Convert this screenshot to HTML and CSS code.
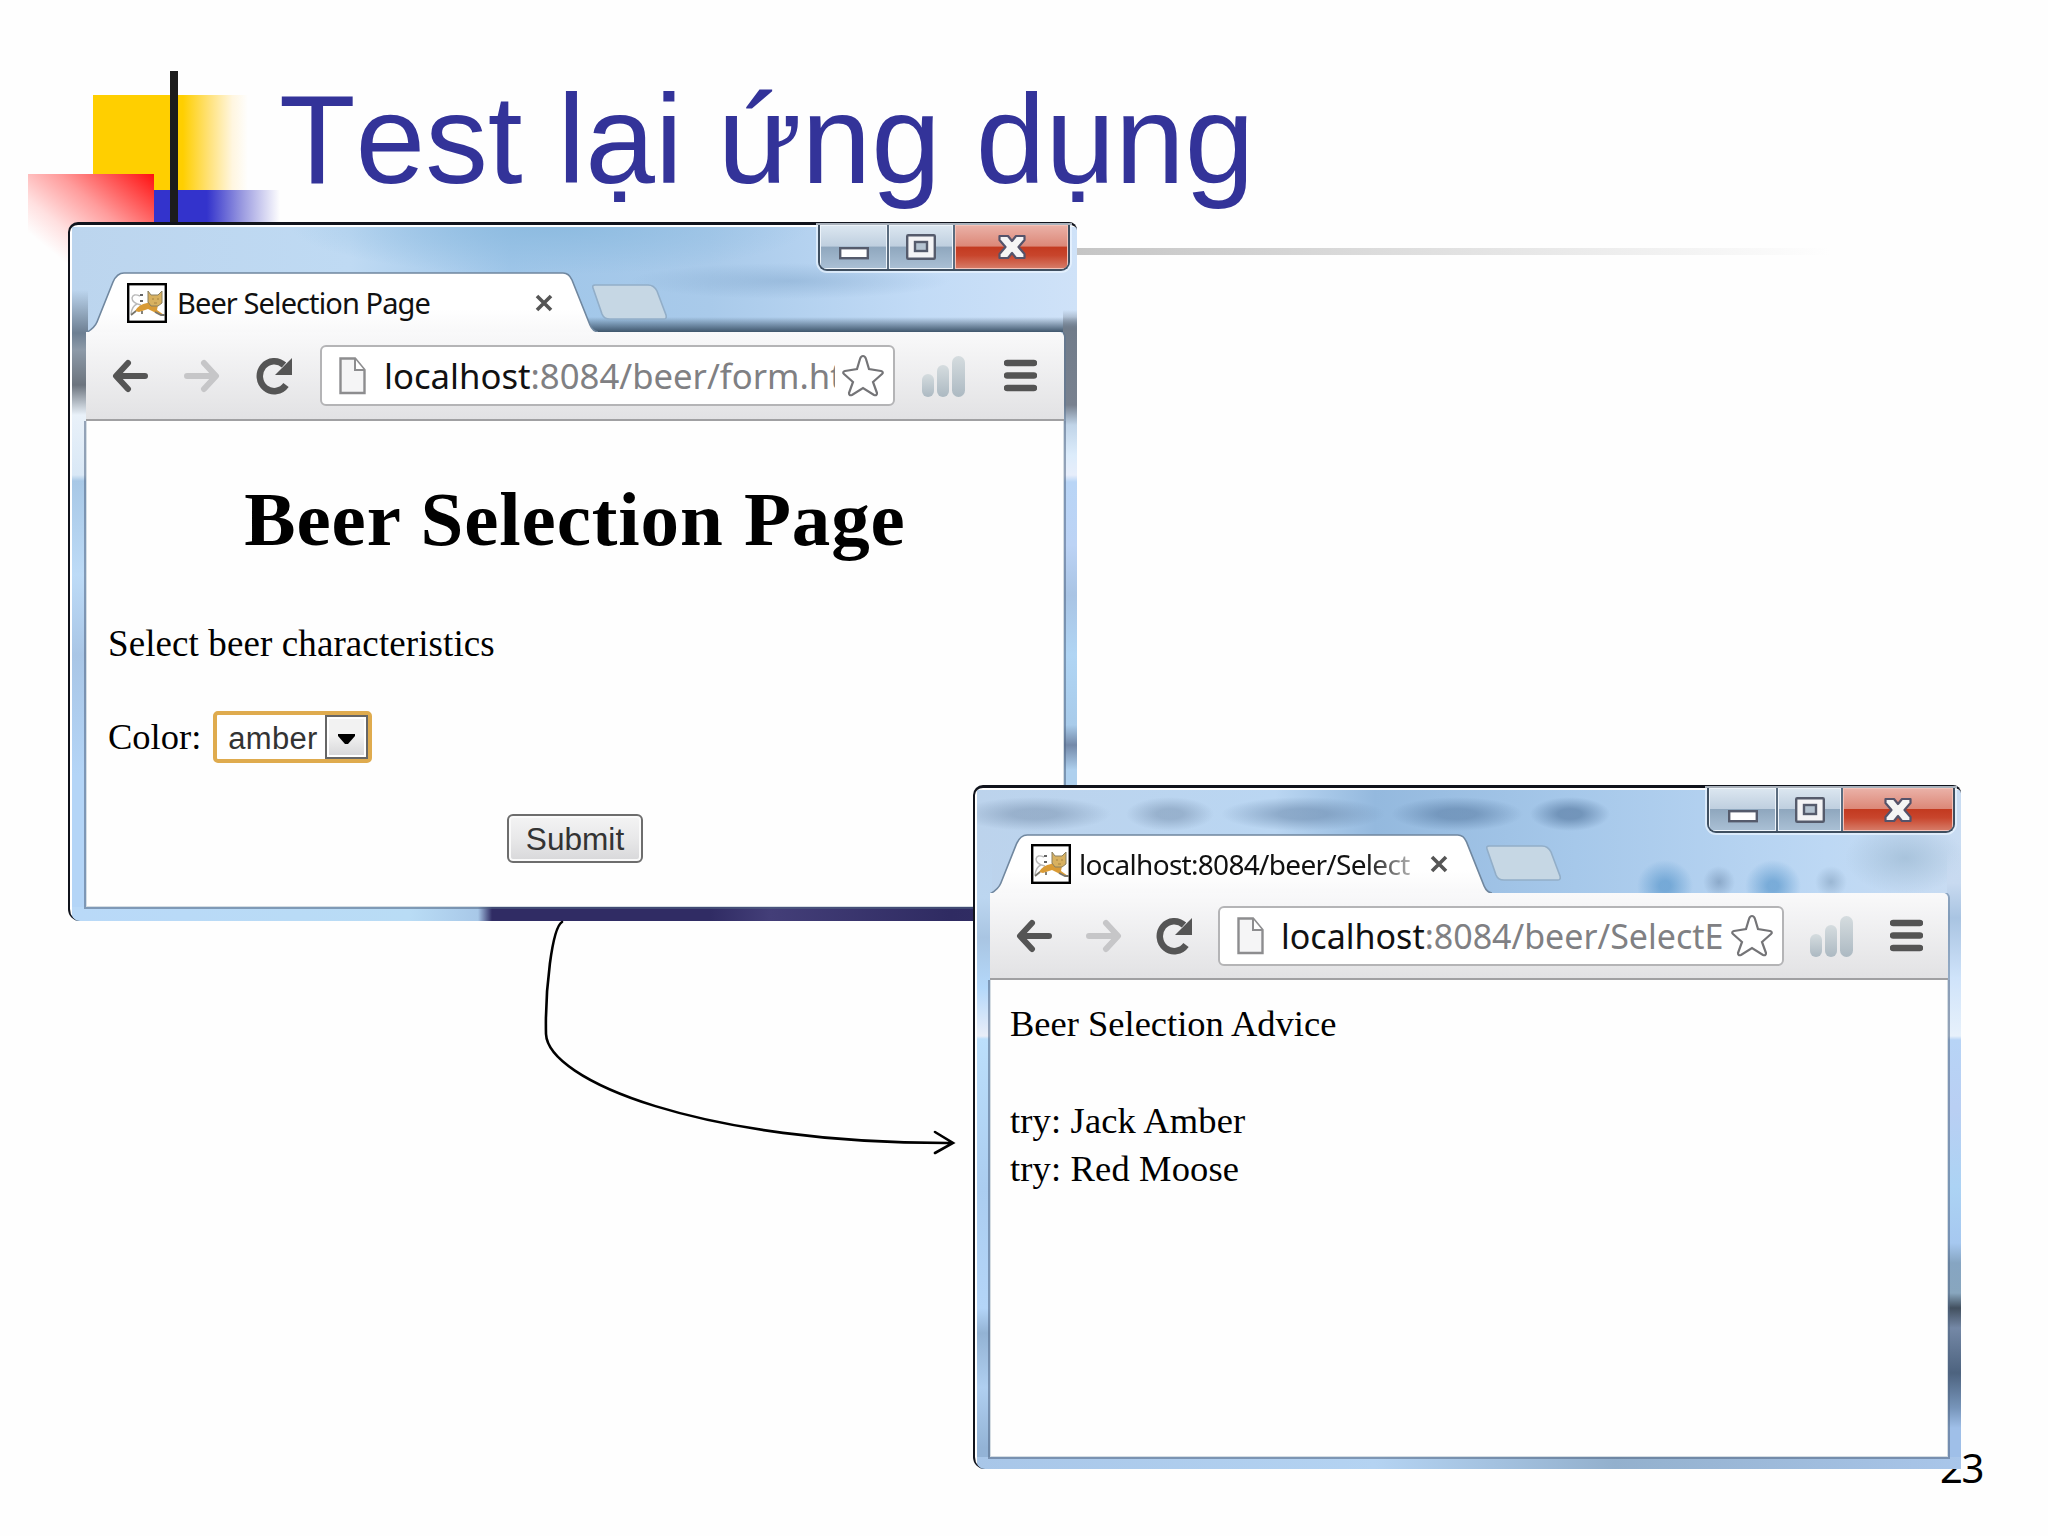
FILE: index.html
```
<!DOCTYPE html>
<html lang="vi">
<head>
    <meta charset="UTF-8">
    <title>Test lại ứng dụng</title>
    <link rel="stylesheet" href="styles.css">
</head>
<body>
    <!-- shared icons -->
    <svg class="icon-defs" width="0" height="0">
        <defs>
            <linearGradient id="tabFill" x1="0" y1="0" x2="0" y2="1">
                <stop offset="0" stop-color="#ffffff"/>
                <stop offset="0.6" stop-color="#ffffff"/>
                <stop offset="1" stop-color="#f8f8f9"/>
            </linearGradient>
            <linearGradient id="barFill" x1="0" y1="0" x2="0" y2="1">
                <stop offset="0" stop-color="#d5dcdf"/>
                <stop offset="1" stop-color="#acb9c2"/>
            </linearGradient>
        </defs>
        <symbol id="tab" viewBox="0 0 512 61" preserveAspectRatio="none">
            <path d="M0 61C5 58 9 55 11 50L27 10Q31 1 38 1H477Q483 1 486 8L504 53Q507 60 513 60V61Z" fill="url(#tabFill)"/>
            <path d="M0 61C5 58 9 55 11 50L27 10Q31 1 38 1H477Q483 1 486 8L504 53Q507 60 513 60" fill="none" stroke="#70879f" stroke-width="1.6"/>
        </symbol>
        <symbol id="newtab" viewBox="0 0 75 36" preserveAspectRatio="none">
            <path d="M3 1H56Q62 1 65 7L74 31Q75 35 72 35H18Q12 35 10 30L1 4Q0 1 3 1Z" fill="#c6d7e4" stroke="#92aec8" stroke-width="1.6"/>
        </symbol>
        <symbol id="cat" viewBox="0 0 40 40" preserveAspectRatio="none">
            <rect x="1.2" y="1.2" width="37.6" height="37.6" fill="#fff" stroke="#000" stroke-width="2.4"/>
            <path d="M14 22Q5 20 5 15Q6 10 13 13M10 21Q5 23 4 31" fill="none" stroke="#b9b9b9" stroke-width="1.4"/>
            <path d="M13 12h3M13 18h3" stroke="#333" stroke-width="1.6"/>
            <path d="M8 28Q12 21 20 20L23 18L31 22L30 27L37 32L29 30L21 26L12 29Z" fill="#d99b36"/>
            <path d="M21 8L24 12H31L35 8V20L31 23H24L21 19Z" fill="#d8b160" stroke="#8b8060" stroke-width="1"/>
            <path d="M25 16h2M30 16h2M27 20h3" stroke="#a88440" stroke-width="1.2"/>
            <path d="M9 28L4 32M15 28V31M28 29L34 32H38" fill="none" stroke="#78756c" stroke-width="1.8"/>
        </symbol>
        <symbol id="close" viewBox="0 0 18 18" preserveAspectRatio="none">
            <path d="M2 2L16 16M16 2L2 16" stroke="#555" stroke-width="3.600"/>
        </symbol>
        <symbol id="back" viewBox="0 0 36 34" preserveAspectRatio="none">
            <path d="M33 17H5M16 4L4 17L16 30" fill="none" stroke="currentColor" stroke-width="6" stroke-linecap="round" stroke-linejoin="round"/>
        </symbol>
        <symbol id="reload" viewBox="0 0 38 38" preserveAspectRatio="none">
            <path d="M31 28A14.5 15 0 1 1 29 8" fill="none" stroke="#555" stroke-width="6.5"/>
            <path d="M37 1V18H20Z" fill="#555"/>
        </symbol>
        <symbol id="page" viewBox="0 0 27 38" preserveAspectRatio="none">
            <path d="M1.5 1.5H16L25.5 13V36H1.5Z" fill="#f5f5f6" stroke="#8d8d8f" stroke-width="2.4"/>
            <path d="M16 2V13H25" fill="#fff" stroke="#8d8d8f" stroke-width="2"/>
        </symbol>
        <symbol id="star" viewBox="0 0 44 44" preserveAspectRatio="none">
            <path d="M22 2Q24 2 25 5L28 15L40 17Q43 18 41 20L32 28L36 39Q36 42 33 41L22 34L11 41Q8 42 8 39L12 28L3 20Q1 18 4 17L16 15L19 5Q20 2 22 2Z" fill="#fff" stroke="#747477" stroke-width="2.2"/>
        </symbol>
        <symbol id="bars" viewBox="0 0 43 42" preserveAspectRatio="none">
            <rect x="0" y="19" width="12" height="23" rx="6" fill="url(#barFill)"/>
            <rect x="15" y="10" width="12" height="32" rx="6" fill="url(#barFill)"/>
            <rect x="30" y="1" width="13" height="41" rx="6.500" fill="url(#barFill)"/>
        </symbol>
        <symbol id="menu" viewBox="0 0 33 33" preserveAspectRatio="none">
            <path d="M3 4H30M3 16.5H30M3 29H30" stroke="#545454" stroke-width="6.4" stroke-linecap="round"/>
        </symbol>
        <symbol id="min" viewBox="0 0 30 26" preserveAspectRatio="none">
            <rect x="1.2" y="14.2" width="27.6" height="10" fill="#fff" stroke="#555b6c" stroke-width="2.4"/>
        </symbol>
        <symbol id="max" viewBox="0 0 30 26" preserveAspectRatio="none">
            <rect x="1.2" y="1.2" width="27.6" height="23.6" rx="1" fill="#f4f4f6" stroke="#555b6c" stroke-width="2.4"/>
            <rect x="9" y="8" width="12" height="9" fill="#b4c3d1" stroke="#555b6c" stroke-width="2.4"/>
        </symbol>
        <symbol id="exit" viewBox="0 0 28 26" preserveAspectRatio="none">
            <path d="M1.500 2H10L14 7L18 2H26.500V6L20.500 13L26.500 20V24H18L14 19L10 24H1.500V20L7.500 13L1.500 6Z" fill="#f5f5f5" stroke="#55536a" stroke-width="2.2" stroke-linejoin="round"/>
        </symbol>
    </svg>

    <div class="slide">
        <div class="deco deco-yellow"></div>
        <div class="deco deco-blue"></div>
        <div class="deco deco-red"></div>
        <div class="deco deco-rule"></div>
        <div class="deco deco-bar"></div>

        <h1 class="slide-title">Test lại ứng dụng</h1>
        <div class="slide-number">23</div>

        <div class="window window-form">
            <div class="titlebar">
                <div class="tab">
                    <svg class="tab-shape"><use href="#tab"/></svg>
                    <svg class="favicon"><use href="#cat"/></svg>
                    <span class="tab-title">Beer Selection Page</span>
                    <svg class="tab-close"><use href="#close"/></svg>
                </div>
                <svg class="new-tab"><use href="#newtab"/></svg>
                <div class="controls">
                    <div class="control control-min"><svg><use href="#min"/></svg></div>
                    <div class="control control-max"><svg><use href="#max"/></svg></div>
                    <div class="control control-exit"><svg><use href="#exit"/></svg></div>
                </div>
            </div>
            <div class="toolbar">
                <svg class="nav nav-back"><use href="#back"/></svg>
                <svg class="nav nav-forward"><use href="#back"/></svg>
                <svg class="nav nav-reload"><use href="#reload"/></svg>
                <div class="address">
                    <svg class="address-page"><use href="#page"/></svg>
                    <span class="address-url"><b>localhost</b>:8084/beer/form.ht</span>
                    <svg class="address-star"><use href="#star"/></svg>
                </div>
                <svg class="signal"><use href="#bars"/></svg>
                <svg class="menu"><use href="#menu"/></svg>
            </div>
            <div class="page">
                <h1 class="page-title">Beer Selection Page</h1>
                <p class="intro">Select beer characteristics</p>
                <div class="color-row">
                    <span>Color:</span>
                    <div class="select">
                        <span class="select-value">amber</span>
                        <span class="select-arrow"><svg width="17" height="10"><path d="M0 0H17V2L10 10H7L0 2Z"/></svg></span>
                    </div>
                </div>
                <button class="submit" type="button">Submit</button>
            </div>
        </div>

        <!-- arrow from the form to the result -->
        <svg class="arrow" width="430" height="250" viewBox="530 915 430 250">
            <path d="M562 922C552 928 545 990 546 1034C548 1080 700 1144 953 1143M935 1132L953 1143L935 1153" fill="none" stroke="#000" stroke-width="2.6" stroke-linecap="round"/>
        </svg>

        <div class="window window-result">
            <div class="titlebar">
                <div class="tab">
                    <svg class="tab-shape"><use href="#tab"/></svg>
                    <svg class="favicon"><use href="#cat"/></svg>
                    <span class="tab-title">localhost:8084/beer/Select</span>
                    <svg class="tab-close"><use href="#close"/></svg>
                </div>
                <svg class="new-tab"><use href="#newtab"/></svg>
                <div class="controls">
                    <div class="control control-min"><svg><use href="#min"/></svg></div>
                    <div class="control control-max"><svg><use href="#max"/></svg></div>
                    <div class="control control-exit"><svg><use href="#exit"/></svg></div>
                </div>
            </div>
            <div class="toolbar">
                <svg class="nav nav-back"><use href="#back"/></svg>
                <svg class="nav nav-forward"><use href="#back"/></svg>
                <svg class="nav nav-reload"><use href="#reload"/></svg>
                <div class="address">
                    <svg class="address-page"><use href="#page"/></svg>
                    <span class="address-url"><b>localhost</b>:8084/beer/SelectE</span>
                    <svg class="address-star"><use href="#star"/></svg>
                </div>
                <svg class="signal"><use href="#bars"/></svg>
                <svg class="menu"><use href="#menu"/></svg>
            </div>
            <div class="page">
                <p class="advice">Beer Selection Advice</p>
                <p class="advice">try: Jack Amber<br>try: Red Moose</p>
            </div>
        </div>
    </div>
</body>
</html>
```
FILE: styles.css
```
* {
    box-sizing: border-box;
}
body {
    margin: 0;
    background: #fefefe;
}
h1, p {
    margin: 0;
}
svg {
    display: block;
    flex: none;
}
.icon-defs {
    position: absolute;
}
.slide {
    position: relative;
    width: 2048px;
    height: 1536px;
    overflow: hidden;
    background: #fefefe;
}

/* slide decoration */
.deco {
    position: absolute;
}
.deco-yellow {
    left: 93px;
    top: 95px;
    width: 155px;
    height: 95px;
    background: linear-gradient(to right, #ffcf00 58%, #ffe27a 75%, #fff6e0 90%, #fefefe);
}
.deco-blue {
    left: 154px;
    top: 190px;
    width: 126px;
    height: 70px;
    background: linear-gradient(to right, #3333cc 42%, #9a9ae0 70%, #fefefe);
}
.deco-red {
    left: 28px;
    top: 174px;
    width: 126px;
    height: 104px;
    background: linear-gradient(to bottom left, #ff1010, #ff9c9c 38%, #ffe0e0 62%, #fefefe 78%);
}
.deco-rule {
    left: 1060px;
    top: 248px;
    width: 770px;
    height: 7px;
    background: linear-gradient(to right, #c4c4c4, #dedede 45%, #fefefe);
}
.deco-bar {
    left: 170px;
    top: 71px;
    width: 8px;
    height: 160px;
    background: #1c1c1c;
}
.slide-title {
    position: absolute;
    left: 279px;
    top: 67px;
    font: 125.3px/147px "Liberation Sans", Arial, sans-serif;
    font-kerning: none;
    color: #333399;
    white-space: nowrap;
}
.slide-number {
    position: absolute;
    left: 1940px;
    top: 1440px;
    font: 40px/56px "Noto Sans", sans-serif;
    letter-spacing: -1.5px;
    color: #000;
}
.arrow {
    position: absolute;
    left: 530px;
    top: 915px;
}

/* browser windows */
.window {
    position: absolute;
    display: flex;
    flex-direction: column;
    border-top: 3px solid #10131c;
    border-left: 2px solid #10131c;
    border-radius: 10px 8px 0 12px;
}
.window-form {
    left: 68px;
    top: 222px;
    width: 1009px;
    height: 699px;
    padding: 0 13px 14px 16px;
    background:
        linear-gradient(#fff, #fff) 0 0 / 100% 2px no-repeat,
        linear-gradient(#fff, #fff) 0 0 / 2px 100% no-repeat,
        linear-gradient(to right, #b9d9f8, #b9dcf5 340px, #a8c8e8 408px, #302c64 422px, #302c64 640px, #433e78 700px, #2f2b62 880px, #333066) 0 100% / 100% 14px no-repeat,
        linear-gradient(rgba(109, 127, 146, 0) 65px, #6d7f92 108px, #8d9aa8 125px, #6c747e 160px, #e9f1f9 190px, #d9e8f6 250px, #a8c8e6 256px, #bddbf7 350px, #a9c6e6 430px, #b4d5f7 550px) 0 0 / 18px 100% no-repeat,
        linear-gradient(rgba(113, 124, 138, 0) 85px, #717c8a 106px, #78818f 180px, #c0d4e8 200px, #dcecfb 230px, #e7eefb 250px, #b9d5f6 257px, #bcd3f5 320px, #a9c4e4 370px, #b0d5f4 430px, #a8cbea 500px, #7389a9 520px, #aed0ee 545px) 100% 0 / 14px 100% no-repeat,
        radial-gradient(ellipse 260px 50px at 480px 0, #8dbbe0, rgba(141, 187, 224, 0)),
        radial-gradient(ellipse 160px 18px at 720px 56px, rgba(110, 150, 190, 0.35), rgba(110, 150, 190, 0)),
        linear-gradient(to bottom, rgba(63, 86, 108, 0) 86%, #3f566c 107px) 510px 0 / 500px 107px no-repeat,
        linear-gradient(to right, #bcd5ee, #bfdaf3 280px, #9fc6e9 440px, #a9caea 640px, #c2dbf6 850px, #cfe2f8);
}
.window-result {
    left: 973px;
    top: 785px;
    width: 988px;
    height: 684px;
    padding: 0 13px 12px 15px;
    background:
        linear-gradient(#fff, #fff) 0 0 / 100% 2px no-repeat,
        linear-gradient(#fff, #fff) 0 0 / 2px 100% no-repeat,
        linear-gradient(to right, #a8c6e8, #b4d3f2 400px, #93b0cd 640px, #a9c6ea) 0 100% / 100% 12px no-repeat,
        linear-gradient(rgba(188, 214, 240, 0) 60px, #bcd6f0 110px, #a9c5e2 150px, #b4d8fa 200px, #e9eef8 248px, #bcdffb 251px, #abcdf0 400px, #b4d5f8 520px, #93b3d4 545px, #b0cff0 600px, #93b3d6 660px) 0 0 / 17px 100% no-repeat,
        linear-gradient(rgba(200, 218, 240, 0) 60px, #c8daf0 95px, #a9c4e2 130px, #cfe3fa 190px, #e7f1fb 248px, #b7d4f6 252px, #b9cff3 320px, #acd3f4 400px, #a6c8f0 455px, #86a5c2 475px, #88a6be 505px, #42505f 520px, #7488a6 540px, #4d637f 585px, #7795ba 620px, #9fbfe8 640px) 100% 0 / 14px 100% no-repeat,
        radial-gradient(ellipse 76px 17px at 60px 26px, rgba(110, 135, 165, 0.45) 30%, rgba(110, 135, 165, 0)),
        radial-gradient(ellipse 44px 17px at 195px 26px, rgba(110, 135, 165, 0.45) 30%, rgba(110, 135, 165, 0)),
        radial-gradient(ellipse 82px 17px at 328px 26px, rgba(100, 130, 165, 0.5) 30%, rgba(100, 130, 165, 0)),
        radial-gradient(ellipse 66px 17px at 482px 26px, rgba(80, 115, 155, 0.5) 30%, rgba(80, 115, 155, 0)),
        radial-gradient(ellipse 40px 17px at 595px 26px, rgba(80, 115, 155, 0.6) 30%, rgba(80, 115, 155, 0)),
        radial-gradient(ellipse 28px 26px at 690px 98px, rgba(80, 145, 200, 0.6) 20%, rgba(80, 145, 200, 0)),
        radial-gradient(ellipse 16px 16px at 744px 94px, rgba(100, 130, 165, 0.5), rgba(100, 130, 165, 0)),
        radial-gradient(ellipse 28px 26px at 798px 98px, rgba(80, 145, 200, 0.6) 20%, rgba(80, 145, 200, 0)),
        radial-gradient(ellipse 16px 16px at 856px 94px, rgba(120, 150, 180, 0.5), rgba(120, 150, 180, 0)),
        radial-gradient(ellipse 60px 36px at 930px 70px, rgba(150, 180, 205, 0.6), rgba(150, 180, 205, 0)),
        linear-gradient(to right, #bcd3ec, #bad6f2 300px, #94b9de 400px, #a6c8ea 600px, #bdd8f4 850px, #c9dcf2);
}

.titlebar {
    display: flex;
    align-items: flex-end;
    flex: none;
}
.window-form .titlebar {
    height: 107px;
}
.window-result .titlebar {
    height: 105px;
}
.tab {
    position: relative;
    display: flex;
    align-items: center;
    flex: none;
    width: 512px;
    height: 61px;
    padding: 0 45px 0 41px;
    margin-bottom: -1px;
}
.window-result .tab {
    width: 502px;
    height: 60px;
    padding-right: 44px;
}
.tab-shape {
    position: absolute;
    left: 0;
    top: 0;
    width: 100%;
    height: 100%;
}
.favicon {
    position: relative;
    width: 40px;
    height: 40px;
}
.tab-title {
    position: relative;
    flex: 1;
    margin: 0 22px 0 10px;
    overflow: hidden;
    white-space: nowrap;
    font: 29px/40px "Noto Sans", sans-serif;
    letter-spacing: -0.9px;
    color: #111;
}
.window-result .tab-title {
    margin: 0 18px 0 8px;
    font-size: 28px;
    letter-spacing: -0.7px;
    -webkit-mask-image: linear-gradient(to right, #000 86%, rgba(0, 0, 0, 0.3));
    mask-image: linear-gradient(to right, #000 86%, rgba(0, 0, 0, 0.3));
}
.tab-close {
    position: relative;
    width: 18px;
    height: 18px;
}
.new-tab {
    width: 75px;
    height: 36px;
    margin: 0 0 12px -6px;
}
.controls {
    display: flex;
    align-self: flex-start;
    margin: 0 -6px 0 auto;
    height: 46px;
    border: 2px solid #3f4f60;
    border-top: 0;
    border-radius: 0 0 9px 9px;
    overflow: hidden;
    box-shadow: 0 0 0 2px rgba(235, 245, 255, 0.7);
}
.window-result .controls {
    height: 45px;
    margin-right: -7px;
}
.control {
    display: flex;
    justify-content: center;
    padding-top: 8px;
    width: 67px;
    background: linear-gradient(#dbe6f0, #bfcfdf 48%, #8fa7be 50%, #a9bfd4);
    border: 1px solid #eef4fa;
}
.control svg {
    width: 30px;
    height: 26px;
}
.control + .control {
    box-shadow: -2px 0 0 #5a6c7f;
    margin-left: 2px;
}
.control-max {
    width: 64px;
}
.control-exit {
    width: 113px;
    background: linear-gradient(#eab0a6, #dc8878 48%, #c33a20 50%, #c8452c 70%, #d67a66);
    border-color: #f4c2b8;
}
.control-exit svg {
    width: 28px;
}
.window-result .control-max {
    width: 63px;
}
.window-result .control-exit {
    width: 110px;
}

.toolbar {
    display: flex;
    align-items: center;
    flex: none;
    height: 89px;
    padding: 0 27px;
    background: linear-gradient(#f9f9fa, #e2e2e4);
    border-bottom: 2px solid #a0a0a2;
    border-top-right-radius: 5px;
    box-shadow: 1px 0 0 1px rgba(90, 115, 145, 0.5);
    clip-path: inset(0 -3px 0 -3px);
}
.window-result .toolbar {
    height: 87px;
    padding: 0 25px 0 26px;
}
.nav {
    width: 36px;
    height: 34px;
    color: #555;
}
.window-form .nav-back {
    margin-left: -1px;
}
.nav-forward {
    margin-left: 36px;
    color: #c6c6c8;
    transform: scaleX(-1);
}
.window-result .nav-forward {
    margin-left: 34px;
}
.nav-reload {
    width: 38px;
    height: 38px;
    margin-left: 35px;
}
.window-result .nav-reload {
    margin-left: 33px;
}
.address {
    display: flex;
    align-items: center;
    flex: 1;
    min-width: 0;
    height: 61px;
    margin: 0 27px;
    padding: 0 8px 0 17px;
    background: #fff;
    border: 2px solid #b4b4b6;
    border-radius: 6px;
}
.window-result .address {
    height: 60px;
    margin: 0 26px 0 25px;
}
.address-page {
    width: 27px;
    height: 38px;
}
.address-url {
    flex: 1;
    overflow: hidden;
    margin: 0 6px 0 18px;
    white-space: nowrap;
    font: 34.7px/48px "Noto Sans", sans-serif;
    color: #808083;
}
.window-result .address-url {
    margin-left: 17px;
    font-size: 34px;
}
.address-url b {
    font-weight: normal;
    color: #111;
}
.address-star {
    width: 44px;
    height: 44px;
}
.signal {
    width: 43px;
    height: 42px;
}
.menu {
    width: 33px;
    height: 33px;
    margin-left: 39px;
}
.window-result .menu {
    margin-left: 37px;
}

/* page content */
.page {
    display: flex;
    flex-direction: column;
    flex: 1;
    background: #fefefe;
    border: 1px solid #d5dde3;
    border-top: 0;
    box-shadow: 0 0 0 2px rgba(80, 100, 130, 0.55);
    clip-path: inset(0 -3px -3px -3px);
    font-family: "Liberation Serif", "Times New Roman", serif;
    color: #000;
}
.page-title {
    margin-top: 55px;
    text-align: center;
    font-size: 77px;
    line-height: 86px;
    letter-spacing: 0.9px;
}
.intro {
    margin: 59px 0 0 21px;
    font-size: 37px;
    line-height: 46px;
    letter-spacing: 0.1px;
}
.color-row {
    display: flex;
    align-items: center;
    margin: 44px 0 0 21px;
    font-size: 36.5px;
    line-height: 46px;
}
.select {
    display: flex;
    width: 159px;
    height: 52px;
    margin-left: 12px;
    border: 4px solid #dfab4e;
    border-radius: 5px;
    background: #fff;
    font: 31px/47px "Liberation Sans", Arial, sans-serif;
    color: #333;
}
.select-value {
    flex: 1;
    padding-left: 11px;
    letter-spacing: 0.3px;
}
.select-arrow {
    display: flex;
    align-items: center;
    justify-content: center;
    width: 43px;
    padding-top: 3px;
    border: 2px solid #666;
    box-shadow: inset 0 0 0 2px #fff;
    background: linear-gradient(#f2f2f2 45%, #d6d6d8);
}
.submit {
    align-self: center;
    width: 136px;
    height: 49px;
    margin-top: 51px;
    padding: 0;
    border: 2px solid #6d6d6d;
    border-radius: 6px;
    box-shadow: inset 0 0 0 2px #fafafa;
    background: linear-gradient(#f4f4f4, #e9e9ea 48%, #d8d8da);
    font: 31.6px/44px "Liberation Sans", Arial, sans-serif;
    color: #333;
}
.advice {
    padding: 20px 0 0 19px;
    font-size: 36.5px;
    line-height: 48px;
}
.advice + .advice {
    padding-top: 49px;
    letter-spacing: 0.15px;
}
```
